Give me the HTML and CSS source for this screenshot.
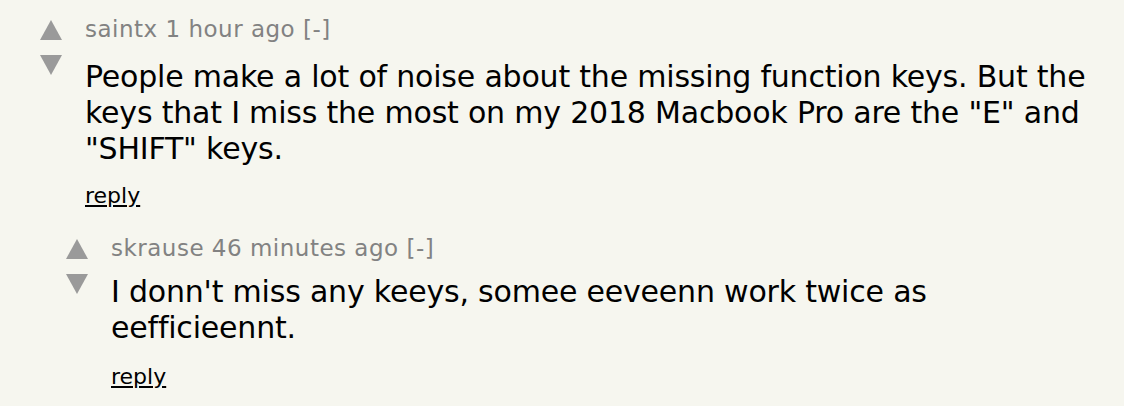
FILE: index.html
```html
<!DOCTYPE html>
<html>
<head>
<meta charset="utf-8">
<link rel="stylesheet" href="styles.css">
</head>
<body>
<div class="thread">
  <div class="comment">
    <div class="votes">
      <span class="arrow up"></span>
      <span class="arrow down"></span>
    </div>
    <div class="content">
      <div class="comhead">saintx 1 hour ago [-]</div>
      <div class="commtext">People make a lot of noise about the missing function keys. But the keys that I miss the most on my 2018 Macbook Pro are the "E" and "SHIFT" keys.</div>
      <div class="reply"><a href="#">reply</a></div>
    </div>
  </div>
  <div class="comment child">
    <div class="votes">
      <span class="arrow up"></span>
      <span class="arrow down"></span>
    </div>
    <div class="content">
      <div class="comhead">skrause 46 minutes ago [-]</div>
      <div class="commtext">I donn't miss any keeys, somee eeveenn work twice as eefficieennt.</div>
      <div class="reply"><a href="#">reply</a></div>
    </div>
  </div>
</div>
</body>
</html>
```
FILE: styles.css
```css
html, body {
  margin: 0;
  padding: 0;
  background: #f6f6ef;
}
body {
  font-family: Verdana, "DejaVu Sans", sans-serif;
  font-variant-ligatures: none;
  color: #000;
  height: 406px;
  overflow: hidden;
}
.thread {
  padding: 15px 20px 0 40px;
}
.comment {
  display: flex;
  align-items: flex-start;
  gap: 23px;
}
.comment.child {
  margin-left: 26px;
  margin-top: 24px;
}
.votes {
  display: flex;
  flex-direction: column;
  gap: 15px;
  padding-top: 5px;
  width: 22px;
  flex: none;
}
.arrow {
  display: block;
  width: 0;
  height: 0;
  border-left: 11px solid transparent;
  border-right: 11px solid transparent;
}
.arrow.up {
  border-bottom: 20px solid #9a9a9a;
}
.arrow.down {
  border-top: 20px solid #9a9a9a;
}
.content {
  flex: 1;
  min-width: 0;
}
.comhead {
  font-size: 23px;
  letter-spacing: 0.5px;
  color: #828282;
  line-height: 28px;
}
.commtext {
  font-size: 30px;
  letter-spacing: -0.2px;
  line-height: 36px;
  margin-top: 16px;
}
.child .commtext {
  margin-top: 12px;
}
.reply {
  font-size: 22px;
  line-height: 28px;
  margin-top: 15px;
}
.child .reply {
  margin-top: 17px;
}
.reply a {
  color: #000;
  text-decoration: underline;
}
```
